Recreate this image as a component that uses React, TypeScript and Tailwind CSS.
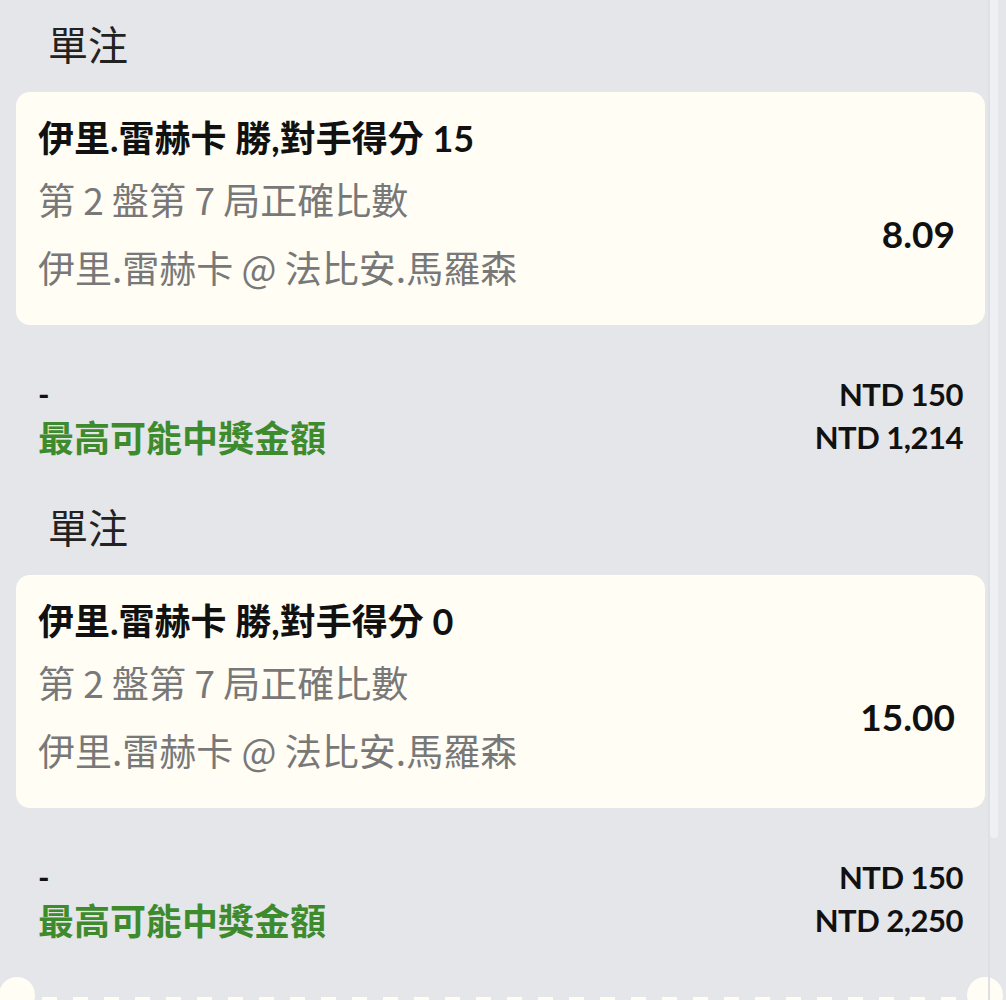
import React from "react";

const latin = "font-['Lato','Noto_Sans_CJK_TC',sans-serif]";
const gray = "font-['Noto_Sans_CJK_TC','Noto_Sans',sans-serif]";

type Bet = { pick: string; odds: string; stake: string; win: string };

const bets: Bet[] = [
  { pick: "伊里.雷赫卡 勝,對手得分 15", odds: "8.09", stake: "NTD 150", win: "NTD 1,214" },
  { pick: "伊里.雷赫卡 勝,對手得分 0", odds: "15.00", stake: "NTD 150", win: "NTD 2,250" },
];

function BetBlock({ bet }: { bet: Bet }) {
  return (
    <div>
      <div className={`pl-[48px] h-[50px] leading-[50px] text-[40px] text-[#222] ${gray}`}>單注</div>
      <div className="mt-[24px] mx-[16px] w-[969px] h-[233px] rounded-[14px] bg-[#fffdf4] pl-[22px] pr-[30px] pt-[21px]">
        <div className={`h-[50px] leading-[50px] text-[36px] font-bold text-[#111] whitespace-nowrap ${latin}`}>
          {bet.pick}
        </div>
        <div className="flex items-center justify-between">
          <div className={`text-[37px] text-[#787878] ${gray}`}>
            <div className="mt-[14px] h-[44px] leading-[44px] whitespace-nowrap">第 2 盤第 7 局正確比數</div>
            <div className="mt-[24px] h-[44px] leading-[44px] whitespace-nowrap">伊里.雷赫卡 @ 法比安.馬羅森</div>
          </div>
          <div className={`text-[37px] font-bold text-[#111] mt-[16px] ${latin}`}>{bet.odds}</div>
        </div>
      </div>
      <div className={`mt-[48px] pl-[38px] pr-[43px] ${latin}`}>
        <div className="flex justify-between items-center h-[43px]">
          <span className="text-[31px] font-bold text-[#111]">-</span>
          <span className="text-[31px] font-bold text-[#111] tracking-[-0.5px]">{bet.stake}</span>
        </div>
        <div className="flex justify-between items-center h-[43px]">
          <span className="text-[36px] font-bold text-[#3e8b2e]">最高可能中獎金額</span>
          <span className="text-[31px] font-bold text-[#111] tracking-[-0.5px]">{bet.win}</span>
        </div>
      </div>
    </div>
  );
}

export default function App() {
  const dashes = Array.from({ length: 30 });
  return (
    <div className="relative w-[1006px] h-[1000px] overflow-hidden bg-[#e5e6e9]">
      <div className="pt-[18px]">
        <BetBlock bet={bets[0]} />
        <div className="mt-[42px]">
          <BetBlock bet={bets[1]} />
        </div>
      </div>
      {/* ticket edge */}
      <div className="absolute left-[-1px] top-[977px] w-[36px] h-[36px] rounded-full bg-[#fffdf4]" />
      <div className="absolute left-[967px] top-[977px] w-[36px] h-[36px] rounded-full bg-[#fffdf4]" />
      <div className="absolute left-[42px] top-[997px] flex gap-[16px]">
        {dashes.map((_, i) => (
          <div key={i} className="w-[15px] h-[3px] bg-[#fffdf4]" />
        ))}
      </div>
      {/* scrollbar */}
      <div className="absolute left-[988px] top-0 w-[2px] h-[1000px] bg-[#dfe0e3]" />
      <div className="absolute left-[990px] top-[-10px] w-[8px] h-[848px] rounded-full bg-[#eff0f3]" />
    </div>
  );
}
